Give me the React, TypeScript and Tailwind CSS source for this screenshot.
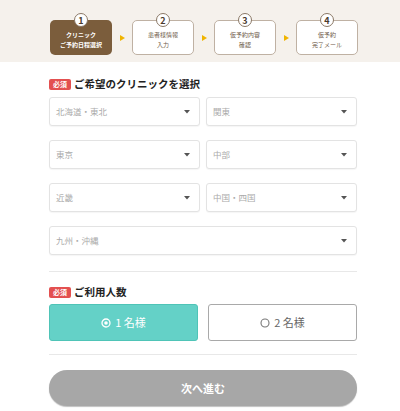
import React from "react";

const steps = [
  { n: "1", lines: ["クリニック", "ご予約日程選択"], active: true },
  { n: "2", lines: ["患者様情報", "入力"], active: false },
  { n: "3", lines: ["仮予約内容", "確認"], active: false },
  { n: "4", lines: ["仮予約", "完了メール"], active: false },
];

function Caret() {
  return (
    <svg width="6" height="4" viewBox="0 0 6 4">
      <path d="M0 0 L6 0 L3 3.5 Z" fill="#555" />
    </svg>
  );
}

function Select({ label }: { label: string }) {
  return (
    <div className="flex h-[29px] items-center justify-between rounded-[3px] border border-[#e3e3e3] bg-white pl-[6px] pr-[9px] leading-none shadow-[0_1px_1px_rgba(0,0,0,0.04)]">
      <span className="text-[8.5px] text-[#aaaaaa]">{label}</span>
      <Caret />
    </div>
  );
}

function Badge() {
  return (
    <span className="flex h-[11px] w-[22px] items-center justify-center rounded-[2px] bg-[#e35050] text-[7px] font-bold leading-none text-white">
      必須
    </span>
  );
}

export default function App() {
  return (
    <div
      className="h-[411px] w-[400px] bg-white"
      style={{ fontFamily: '"Noto Sans CJK JP", "Noto Sans", sans-serif' }}
    >
      <div className="flex h-[62px] items-start bg-[#f5f1ec] pl-[50px] pt-[13px]">
        {steps.map((s, i) => (
          <React.Fragment key={s.n}>
            {i > 0 && (
              <div className="flex h-[35px] w-[20px] items-center justify-center pt-[14px]">
                <svg width="5" height="6" viewBox="0 0 5 6">
                  <path d="M0 0 L5 3 L0 6 Z" fill="#f0b400" />
                </svg>
              </div>
            )}
            <div className="relative w-[62px] pt-[7px]">
              <div
                className={
                  s.active
                    ? "flex h-[35px] flex-col items-center justify-center rounded-[5px] bg-[#7b5d3c] pt-[4px] text-[6px] font-bold leading-[10px] text-white"
                    : "flex h-[35px] flex-col items-center justify-center rounded-[5px] border border-[#bfb1a3] bg-white pt-[4px] text-[6px] leading-[10px] text-[#6e5a48]"
                }
              >
                {s.lines.map((l) => (
                  <span key={l}>{l}</span>
                ))}
              </div>
              <div className="absolute left-1/2 top-0 flex h-[14px] w-[14px] -translate-x-1/2 items-center justify-center rounded-full border border-[#8a7866] bg-white text-[9px] font-bold leading-none text-[#4a3a2c]">
                {s.n}
              </div>
            </div>
          </React.Fragment>
        ))}
      </div>

      <div className="ml-[49px] w-[308px]">
        <div className="mt-[17px] flex h-[11px] items-center gap-[3px] leading-none">
          <Badge />
          <span className="text-[10.5px] font-bold text-[#222]">ご希望のクリニックを選択</span>
        </div>
        <div className="mt-[7px] grid grid-cols-2 gap-x-[6px] gap-y-[14px]">
          <Select label="北海道・東北" />
          <Select label="関東" />
          <Select label="東京" />
          <Select label="中部" />
          <Select label="近畿" />
          <Select label="中国・四国" />
          <div className="col-span-2">
            <Select label="九州・沖縄" />
          </div>
        </div>
        <div className="mt-[16px] h-px bg-[#e8e8e8]" />
        <div className="mt-[15px] flex h-[11px] items-center gap-[3px] leading-none">
          <Badge />
          <span className="text-[10.5px] font-bold text-[#222]">ご利用人数</span>
        </div>
        <div className="mt-[6px] grid grid-cols-2 gap-[10px] leading-none">
          <div className="flex h-[37px] items-center justify-center gap-[4px] rounded-[3px] border border-[#4fc4b7] bg-[#64d1c7] text-[11px] text-white">
            <svg width="10" height="10" viewBox="0 0 10 10">
              <circle cx="5" cy="5" r="4" fill="none" stroke="white" strokeWidth="1.3" />
              <circle cx="5" cy="5" r="1.8" fill="white" />
            </svg>
            <span>1 名様</span>
          </div>
          <div className="flex h-[37px] items-center justify-center gap-[4px] rounded-[3px] border border-[#a9a9a9] bg-white text-[11px] text-[#666]">
            <svg width="10" height="10" viewBox="0 0 10 10">
              <circle cx="5" cy="5" r="4" fill="none" stroke="#777" strokeWidth="1.1" />
            </svg>
            <span>2 名様</span>
          </div>
        </div>
        <div className="mt-[13px] h-px bg-[#e8e8e8]" />
        <div className="mt-[15px] flex h-[36px] items-center justify-center rounded-full bg-[#a7a7a7] text-[11px] font-bold leading-none text-white shadow-[0_1px_1px_rgba(0,0,0,0.25)]">
          次へ進む
        </div>
      </div>
    </div>
  );
}
